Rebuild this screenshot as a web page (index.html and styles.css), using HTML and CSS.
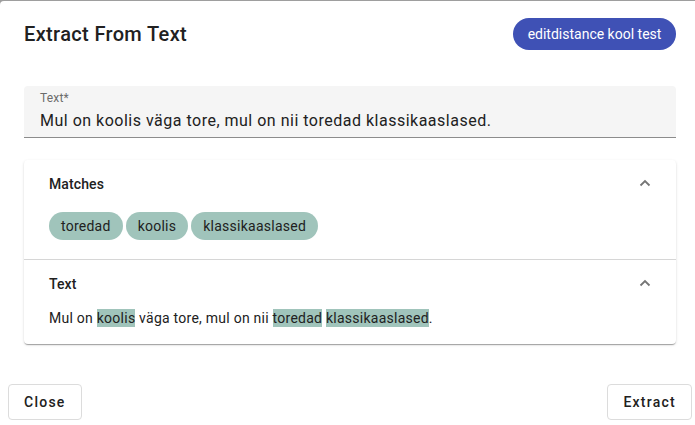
FILE: index.html
```html
<!DOCTYPE html>
<html>
<head>
<meta charset="utf-8">
<link rel="stylesheet" href="styles.css">
</head>
<body>
<div class="dialog">
  <div class="content">
    <div class="head">
      <h1 class="title">Extract From Text</h1>
      <span class="badge">editdistance kool test</span>
    </div>
    <div class="field">
      <div class="label">Text*</div>
      <div class="input">Mul on koolis väga tore, mul on nii toredad klassikaaslased.</div>
    </div>
    <div class="accordion">
      <section class="panel">
        <div class="panel-head">
          <span class="panel-title">Matches</span>
          <svg class="chev" width="12" height="8" viewBox="0 0 12 8"><path d="M1.5 6.5 L6 2 L10.5 6.5" fill="none" stroke="#757575" stroke-width="1.8"/></svg>
        </div>
        <div class="panel-body chips">
          <span class="chip">toredad</span>
          <span class="chip">koolis</span>
          <span class="chip">klassikaaslased</span>
        </div>
      </section>
      <section class="panel">
        <div class="panel-head">
          <span class="panel-title">Text</span>
          <svg class="chev" width="12" height="8" viewBox="0 0 12 8"><path d="M1.5 6.5 L6 2 L10.5 6.5" fill="none" stroke="#757575" stroke-width="1.8"/></svg>
        </div>
        <div class="panel-body text">Mul on <mark>koolis</mark> väga tore, mul on nii <mark>toredad</mark> <mark>klassikaaslased</mark>.</div>
      </section>
    </div>
  </div>
  <div class="actions">
    <button class="btn">Close</button>
    <button class="btn">Extract</button>
  </div>
</div>
</body>
</html>
```
FILE: styles.css
```css
html, body {
  margin: 0;
  padding: 0;
  background: #9e9e9e;
  font-family: Roboto, "Liberation Sans", sans-serif;
  color: #212121;
}
body {
  padding-top: 1px;
}
.dialog {
  background: #fff;
  border-top-left-radius: 4px;
  height: 424px;
  box-sizing: border-box;
  display: flex;
  flex-direction: column;
}
.content {
  padding: 17px 19px 0 24px;
}
.head {
  display: flex;
  justify-content: space-between;
  align-items: center;
  height: 32px;
}
.title {
  margin: 0;
  font-size: 20px;
  font-weight: 500;
  line-height: 32px;
  color: #212121;
  letter-spacing: 0.35px;
}
.badge {
  background: #3f51b5;
  color: #fff;
  font-size: 14px;
  line-height: 32px;
  height: 32px;
  padding: 0 12px;
  border-radius: 16px;
  width: 139px;
  text-align: center;
}
.field {
  margin-top: 36px;
  background: #f5f5f5;
  border-radius: 4px 4px 0 0;
  border-bottom: 1px solid #8c8c8c;
  padding: 4px 16px 4px;
}
.label {
  font-size: 12px;
  line-height: 16px;
  color: #6b6b6b;
  letter-spacing: 0.2px;
}
.input {
  margin-top: 3px;
  font-size: 16px;
  line-height: 24px;
  color: #212121;
  letter-spacing: 0.5px;
}
.accordion {
  margin-top: 22px;
  border-radius: 4px;
  box-shadow: 0 2px 1px -1px rgba(0,0,0,.2), 0 1px 1px 0 rgba(0,0,0,.14), 0 1px 3px 0 rgba(0,0,0,.12);
  background: #fff;
}
.panel + .panel {
  border-top: 1px solid #d6d6d6;
}
.panel-head {
  height: 48px;
  display: flex;
  align-items: center;
  justify-content: space-between;
  padding: 0 25px 0 25px;
}
.panel-title {
  font-size: 14px;
  font-weight: 500;
  color: #212121;
  letter-spacing: 0.1px;
}
.chev {
  display: block;
  margin-top: -2px;
}
.panel-body {
  padding: 0 24px 16px 25px;
}
.chips {
  display: flex;
  gap: 3px;
  padding-top: 4px;
  padding-bottom: 19px;
}
.chip {
  background: #a0c4bb;
  border-radius: 14px;
  height: 28px;
  line-height: 28px;
  padding: 0 12px;
  font-size: 14px;
  color: #212121;
  letter-spacing: 0.25px;
}
.text {
  font-size: 14px;
  line-height: 20px;
  padding-top: 0;
  padding-bottom: 16px;
  letter-spacing: 0.25px;
}
mark {
  background: #a0c4bb;
  color: #212121;
  padding: 1px 0;
}
.actions {
  margin-top: auto;
  display: flex;
  justify-content: space-between;
  padding: 0 3px 5px 8px;
}
.btn {
  font-family: Roboto, "Liberation Sans", sans-serif;
  font-size: 14px;
  font-weight: 500;
  letter-spacing: 1.25px;
  color: #212121;
  background: #fff;
  border: 1px solid #dcdcdc;
  border-radius: 4px;
  height: 36px;
  padding: 0 15px;
}
```
